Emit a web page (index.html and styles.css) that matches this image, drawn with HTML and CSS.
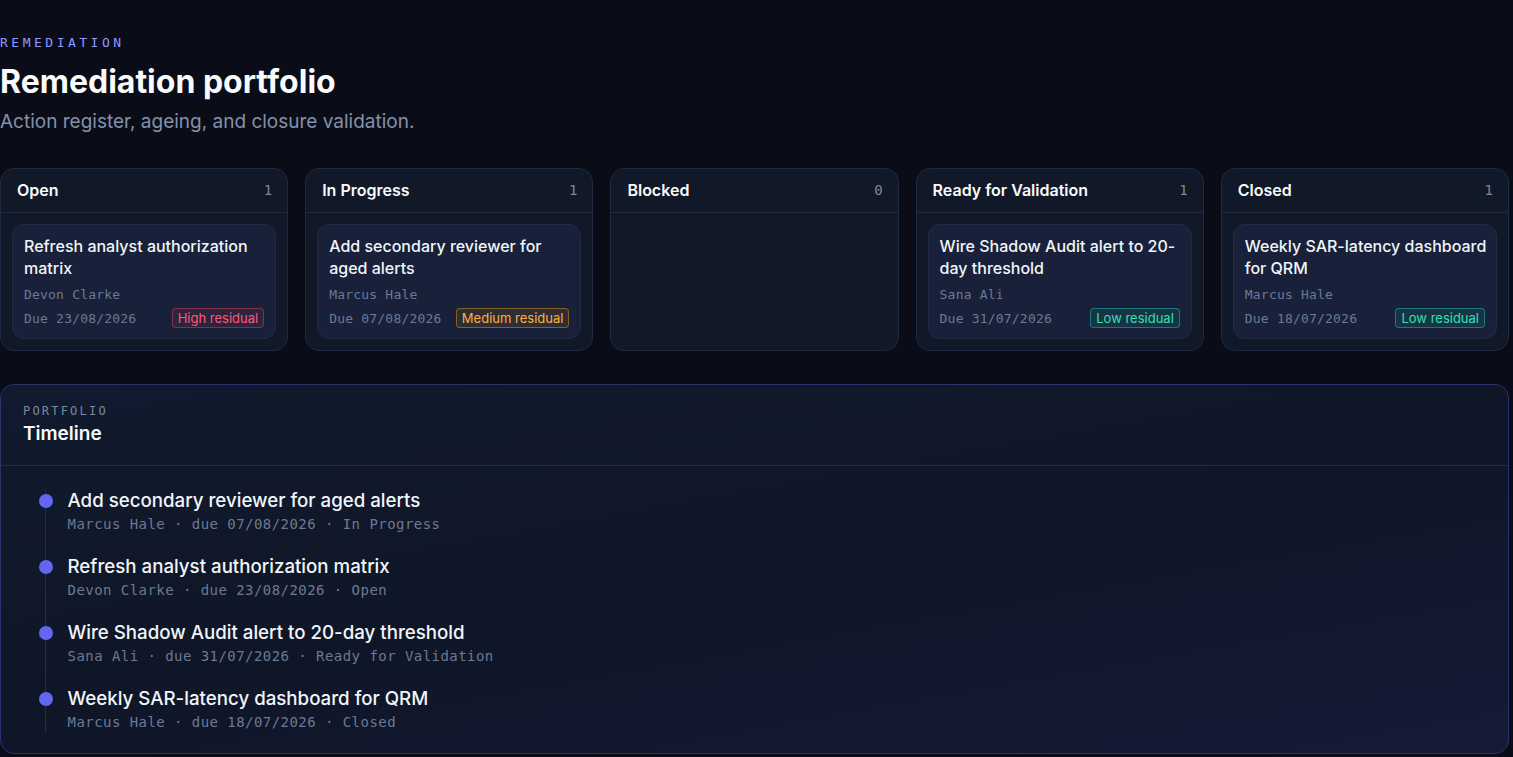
FILE: index.html
```html
<!DOCTYPE html>
<html lang="en">
<head>
    <meta charset="UTF-8">
    <meta name="viewport" content="width=device-width, initial-scale=1.0">
    <title>Remediation portfolio</title>
    <link rel="stylesheet" href="styles.css">
</head>
<body>

<div class="page">
    <header class="page-head">
        <p class="eyebrow">REMEDIATION</p>
        <h1>Remediation portfolio</h1>
        <p class="lede">Action register, ageing, and closure validation.</p>
    </header>

    <div class="board">
        <section class="column">
            <div class="column-head">
                <h2>Open</h2>
                <span class="count">1</span>
            </div>
            <div class="column-body">
                <div class="card">
                    <h3>Refresh analyst authorization matrix</h3>
                    <p class="owner">Devon Clarke</p>
                    <div class="card-foot">
                        <span class="due">Due 23/08/2026</span>
                        <span class="badge high">High residual</span>
                    </div>
                </div>
            </div>
        </section>

        <section class="column">
            <div class="column-head">
                <h2>In Progress</h2>
                <span class="count">1</span>
            </div>
            <div class="column-body">
                <div class="card">
                    <h3>Add secondary reviewer for aged alerts</h3>
                    <p class="owner">Marcus Hale</p>
                    <div class="card-foot">
                        <span class="due">Due 07/08/2026</span>
                        <span class="badge medium">Medium residual</span>
                    </div>
                </div>
            </div>
        </section>

        <section class="column">
            <div class="column-head">
                <h2>Blocked</h2>
                <span class="count">0</span>
            </div>
            <div class="column-body"></div>
        </section>

        <section class="column">
            <div class="column-head">
                <h2>Ready for Validation</h2>
                <span class="count">1</span>
            </div>
            <div class="column-body">
                <div class="card">
                    <h3>Wire Shadow Audit alert to 20-day threshold</h3>
                    <p class="owner">Sana Ali</p>
                    <div class="card-foot">
                        <span class="due">Due 31/07/2026</span>
                        <span class="badge low">Low residual</span>
                    </div>
                </div>
            </div>
        </section>

        <section class="column">
            <div class="column-head">
                <h2>Closed</h2>
                <span class="count">1</span>
            </div>
            <div class="column-body">
                <div class="card">
                    <h3>Weekly SAR-latency dashboard for QRM</h3>
                    <p class="owner">Marcus Hale</p>
                    <div class="card-foot">
                        <span class="due">Due 18/07/2026</span>
                        <span class="badge low">Low residual</span>
                    </div>
                </div>
            </div>
        </section>
    </div>

    <section class="panel">
        <div class="panel-head">
            <p class="panel-eyebrow">PORTFOLIO</p>
            <h2>Timeline</h2>
        </div>
        <ol class="timeline">
            <li class="event">
                <span class="dot"></span>
                <div>
                    <p class="event-title">Add secondary reviewer for aged alerts</p>
                    <p class="event-meta">Marcus Hale · due 07/08/2026 · In Progress</p>
                </div>
            </li>
            <li class="event">
                <span class="dot"></span>
                <div>
                    <p class="event-title">Refresh analyst authorization matrix</p>
                    <p class="event-meta">Devon Clarke · due 23/08/2026 · Open</p>
                </div>
            </li>
            <li class="event">
                <span class="dot"></span>
                <div>
                    <p class="event-title">Wire Shadow Audit alert to 20-day threshold</p>
                    <p class="event-meta">Sana Ali · due 31/07/2026 · Ready for Validation</p>
                </div>
            </li>
            <li class="event">
                <span class="dot"></span>
                <div>
                    <p class="event-title">Weekly SAR-latency dashboard for QRM</p>
                    <p class="event-meta">Marcus Hale · due 18/07/2026 · Closed</p>
                </div>
            </li>
        </ol>
    </section>
</div>

</body>
</html>
```

FILE: styles.css
```css
body {
    margin: 0;
    background: #0a0d18;
    color: #e5e7eb;
    font-family: Inter, 'Noto Sans', sans-serif;
}
p, h1, h2, h3, ol {
    margin: 0;
    padding: 0;
}
.page {
    width: 1509px;
    padding-top: 34px;
}
.eyebrow {
    font-family: 'DejaVu Sans Mono', monospace;
    font-size: 13px;
    line-height: 17px;
    letter-spacing: 3.5px;
    color: #9097ff;
}
h1 {
    font-size: 32px;
    line-height: 40px;
    font-weight: 700;
    color: #f8fafc;
    margin-top: 11px;
}
.lede {
    font-size: 19px;
    line-height: 26px;
    color: #8391ab;
    margin-top: 7px;
}
.board {
    display: grid;
    grid-template-columns: repeat(5, 1fr);
    gap: 17px;
    margin-top: 33px;
}
.column {
    background: #111827;
    border: 1px solid #1f2a40;
    border-radius: 14px;
    height: 183px;
    box-sizing: border-box;
}
.column-head {
    display: flex;
    justify-content: space-between;
    align-items: center;
    height: 42px;
    padding: 0 15px 1px 16px;
    border-bottom: 1px solid #1f2a40;
}
.column-head h2 {
    font-size: 16px;
    font-weight: 600;
    color: #f8fafc;
}
.count {
    font-family: 'DejaVu Sans Mono', monospace;
    font-size: 14px;
    color: #7b879e;
}
.column-body {
    padding: 11px;
}
.card {
    background: #182139;
    border: 1px solid #222d45;
    border-radius: 12px;
    padding: 10px 8px 10px 11px;
}
.card h3 {
    font-size: 16px;
    line-height: 22px;
    font-weight: 500;
    color: #f1f5f9;
}
.owner, .due {
    font-family: 'DejaVu Sans Mono', monospace;
    font-size: 13px;
    letter-spacing: 0.2px;
    color: #6b7a94;
}
.owner {
    margin-top: 6px;
    line-height: 20px;
}
.card-foot {
    display: flex;
    justify-content: space-between;
    align-items: center;
    margin: 3px 3px 0 0;
}
.badge {
    font-size: 13px;
    line-height: 18px;
    padding: 0 5px;
    border-radius: 4px;
    border: 1px solid;
}
.badge.high {
    color: #fb5a78;
    border-color: rgba(244, 63, 94, 0.45);
    background: rgba(244, 63, 94, 0.1);
}
.badge.medium {
    color: #fbb13c;
    border-color: rgba(245, 158, 11, 0.45);
    background: rgba(245, 158, 11, 0.1);
}
.badge.low {
    color: #34e0b0;
    border-color: rgba(20, 184, 166, 0.55);
    background: rgba(20, 184, 166, 0.12);
}
.panel {
    margin-top: 33px;
    border: 1px solid #28336b;
    border-radius: 14px;
    background: linear-gradient(170deg, #111a2e 0%, #0f1627 50%, #151a36 100%);
    height: 370px;
    box-sizing: border-box;
}
.panel-head {
    padding: 18px 22px 16px;
    border-bottom: 1px solid #222c48;
}
.panel-eyebrow {
    font-family: 'DejaVu Sans Mono', monospace;
    font-size: 12px;
    line-height: 16px;
    letter-spacing: 2.2px;
    color: #7c889f;
}
.panel-head h2 {
    font-size: 19px;
    line-height: 30px;
    font-weight: 600;
    color: #f8fafc;
}
.timeline {
    list-style: none;
    margin: 23px 0 0 44px;
    border-left: 1px solid #222c48;
}
.event {
    display: flex;
    align-items: flex-start;
    padding-bottom: 20px;
}
.event:last-child {
    padding-bottom: 0;
}
.dot {
    width: 14px;
    height: 14px;
    border-radius: 50%;
    background: #6366f1;
    margin: 5px 0 0 -7.5px;
    flex-shrink: 0;
}
.event > div {
    margin-left: 15px;
}
.event-title {
    font-size: 18.7px;
    line-height: 24px;
    font-weight: 500;
    color: #f1f5f9;
}
.event-meta {
    font-family: 'DejaVu Sans Mono', monospace;
    font-size: 14px;
    line-height: 22px;
    letter-spacing: 0.45px;
    color: #6b7a94;
}
```
